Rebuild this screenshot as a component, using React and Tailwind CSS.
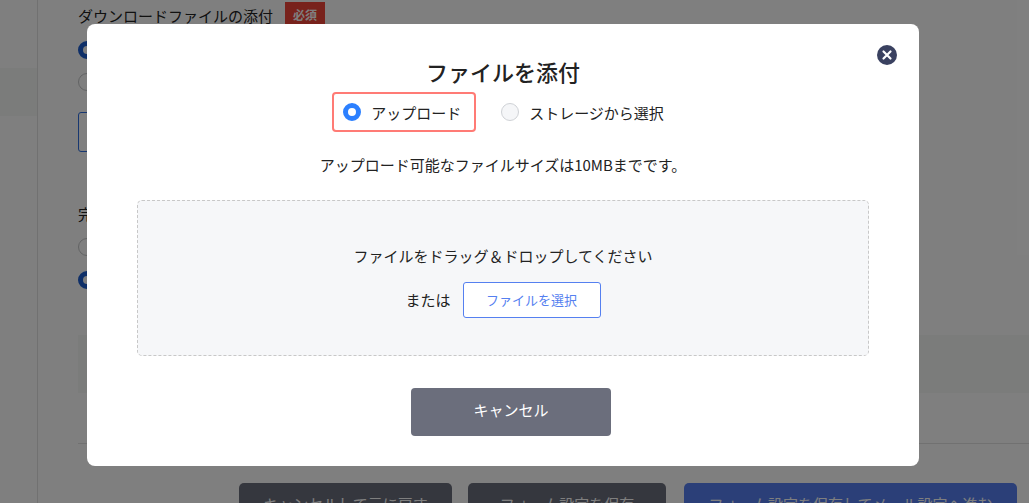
const font = { fontFamily: '"Noto Sans CJK JP", "Noto Sans", sans-serif' };

function PageRadio({ checked }) {
  return (
    <span
      className={
        checked
          ? 'block w-[18px] h-[18px] rounded-full border-[5px] border-[#1e5fd0] bg-white'
          : 'block w-[18px] h-[18px] rounded-full border border-[#c4c6c8] bg-white'
      }
    />
  );
}

function BackgroundPage() {
  return (
    <div className="flex h-[503px] overflow-hidden bg-white text-[#222]">
      <div className="w-[38px] shrink-0 border-r border-[#e2e2e2] pt-[68px]">
        <div className="h-[48px] bg-[#f6f8f6]" />
      </div>
      <div className="flex-1 pl-[40px]">
        <div className="flex items-start h-[33px] pt-[2px]">
          <span className="text-[15px] leading-[28px]">ダウンロードファイルの添付</span>
          <span className="ml-[12px] h-[26px] w-[40px] bg-[#f04438] text-white text-[12px] font-bold leading-[26px] text-center">
            必須
          </span>
        </div>
        <div className="pt-[8px]">
          <PageRadio checked />
        </div>
        <div className="pt-[14px]">
          <PageRadio />
        </div>
        <div className="mt-[21px] h-[40px] w-[300px] rounded-[3px] border border-[#2f6fe0] bg-white" />
        <div className="mt-[50px] text-[15px] leading-[24px]">完了</div>
        <div className="pt-[12px]">
          <PageRadio />
        </div>
        <div className="pt-[15px]">
          <PageRadio checked />
        </div>
        <div className="mt-[46px] h-[58px] bg-[#f6f8f6]" />
        <div className="mt-[50px] border-t border-[#e2e2e2]" />
        <div className="mt-[39px] flex">
          <button className="ml-[161px] h-[40px] w-[213px] pt-[3px] rounded-[5px] bg-[#6b6e7c] text-[#fff] text-[15px]">
            キャンセルして元に戻す
          </button>
          <button className="ml-[16px] h-[40px] w-[198px] pt-[3px] rounded-[5px] bg-[#6b6e7c] text-[#fff] text-[15px]">
            フォーム設定を保存
          </button>
          <button className="ml-[18px] h-[40px] w-[333px] pt-[3px] rounded-[5px] bg-[#567ef0] text-[#fff] text-[15px]">
            フォーム設定を保存してメール設定へ進む
          </button>
        </div>
      </div>
    </div>
  );
}

function UploadModal() {
  return (
    <div className="relative w-[832px] h-[442px] rounded-[8px] bg-white flex flex-col items-center text-[#222]">
      <button className="absolute top-[21px] right-[22px] w-[20px] h-[20px]">
        <svg viewBox="0 0 20 20" className="block w-[20px] h-[20px]">
          <circle cx="10" cy="10" r="10" fill="#3a4160" />
          <path d="M6.5 6.5l7 7M13.5 6.5l-7 7" stroke="#fff" strokeWidth="2.2" strokeLinecap="round" />
        </svg>
      </button>
      <h2 className="mt-[30px] text-[22px] leading-[34px] font-medium">ファイルを添付</h2>
      <div className="mt-[4px] flex items-center h-[40px] text-[15px] -translate-x-[5px]">
        <label className="flex items-center h-[40px] w-[144px] pl-[9px] rounded-[4px] border-2 border-[#ff7b75]">
          <span className="w-[18px] h-[18px] rounded-full border-[5px] border-[#2c80ff] bg-white" />
          <span className="ml-[10px] mt-[2px]">アップロード</span>
        </label>
        <label className="flex items-center ml-[25px]">
          <span className="w-[18px] h-[18px] rounded-full border border-[#cfd2d6] bg-[#f5f6f8]" />
          <span className="ml-[10px] mt-[2px]">ストレージから選択</span>
        </label>
      </div>
      <p className="mt-[21px] text-[15px] leading-[24px]">アップロード可能なファイルサイズは10MBまでです。</p>
      <div className="mt-[23px] w-[732px] h-[156px] rounded-[5px] border border-dashed border-[#c8c8c8] bg-[#f6f7f9] flex flex-col items-center text-[15px]">
        <p className="mt-[43px] leading-[24px]">ファイルをドラッグ＆ドロップしてください</p>
        <div className="mt-[14px] flex items-center">
          <span>または</span>
          <button className="ml-[12px] w-[138px] h-[36px] rounded-[3px] border border-[#5580f0] bg-white text-[#5580f0] text-[13px]">
            ファイルを選択
          </button>
        </div>
      </div>
      <button className="mt-[32px] ml-[16px] w-[200px] h-[48px] pb-[3px] rounded-[4px] bg-[#6b6e7c] text-white text-[15px]">
        キャンセル
      </button>
    </div>
  );
}

export default function App() {
  return (
    <div className="relative h-[503px] overflow-hidden" style={font}>
      <BackgroundPage />
      <div className="absolute inset-0 bg-black/50 pt-[24px] pl-[87px]">
        <UploadModal />
      </div>
    </div>
  );
}
